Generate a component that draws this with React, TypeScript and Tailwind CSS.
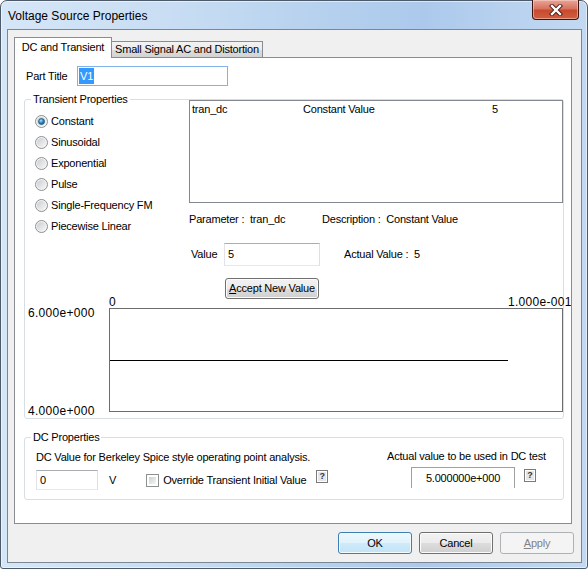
import React from 'react'

const radios = ['Constant', 'Sinusoidal', 'Exponential', 'Pulse', 'Single-Frequency FM', 'Piecewise Linear']

function Radio({ checked }: { checked?: boolean }) {
  return (
    <svg width="13" height="13" viewBox="0 0 13 13" className="shrink-0">
      <defs>
        <linearGradient id="rbBg" x1="0" y1="0" x2="1" y2="1">
          <stop offset="0" stopColor="#c9cdd2" />
          <stop offset="1" stopColor="#f7f7f7" />
        </linearGradient>
        <radialGradient id="rbDot" cx="0.4" cy="0.35" r="0.75">
          <stop offset="0" stopColor="#a6e4ff" />
          <stop offset="0.45" stopColor="#2f93cc" />
          <stop offset="1" stopColor="#0d4a78" />
        </radialGradient>
      </defs>
      <circle cx="6.5" cy="6.5" r="6" fill="#f4f4f4" stroke="#8e8f8f" />
      <circle cx="6.5" cy="6.5" r="4.6" fill="url(#rbBg)" />
      {checked && <circle cx="6.5" cy="6.5" r="3" fill="url(#rbDot)" stroke="#1c4f74" strokeWidth="0.7" />}
    </svg>
  )
}

function Help() {
  return (
    <span className="flex h-[13px] w-[12px] shrink-0 items-center justify-center border border-[#7a7a7a] bg-[#e6e6e6] shadow-[inset_0_0_0_1px_#ffffff] text-[9px] font-bold leading-none tracking-normal text-[#333]">
      ?
    </span>
  )
}

const btn =
  'flex items-center justify-center rounded-[3px] border border-[#707070] bg-[linear-gradient(#f2f2f2_0%,#ebebeb_50%,#dddddd_51%,#cfcfcf_100%)] shadow-[inset_0_0_0_1px_#fcfcfc]'

export default function App() {
  return (
    <div className="relative flex h-[569px] w-[588px] flex-col rounded-t-[7px] rounded-b-[3px] border border-[#4d5a69] bg-[linear-gradient(90deg,#d5e6f7_0%,#c8ddf3_30%,#b9d3ef_50%,#acc9ec_72%,#c3d9f2_100%)] pb-[5px] pl-[6px] pr-[5px] font-['Liberation_Sans',Arial,sans-serif] text-[11px] leading-[13px] tracking-[-0.2px] text-black shadow-[inset_0_0_0_1px_rgba(255,255,255,0.55)]">
      {/* title bar */}
      <div className="flex h-[28px] items-start">
        <span className="ml-[1px] mt-[7px] text-[12px] leading-[16px] tracking-normal text-black">Voltage Source Properties</span>
        <div className="ml-auto mr-[3px] mt-[-1px] flex h-[20px] w-[47px] items-center justify-center rounded-b-[4px] border border-t-0 border-[#3d1410] bg-[linear-gradient(#e8a599_0%,#d7735f_45%,#c84a2f_55%,#d0603f_100%)] shadow-[inset_0_0_0_1px_rgba(255,220,210,0.5)]">
          <svg width="14" height="12" viewBox="0 0 14 12">
            <path d="M3 2 L11 10 M11 2 L3 10" stroke="#4a1a12" strokeWidth="4.2" strokeLinecap="square" />
            <path d="M3 2 L11 10 M11 2 L3 10" stroke="#ffffff" strokeWidth="2.4" strokeLinecap="square" />
          </svg>
        </div>
      </div>

      {/* client area */}
      <div className="flex flex-1 flex-col border border-[#7b8794] bg-[#f0f0f0] pl-[6px] pt-[7px]">
        {/* tabs */}
        <div className="flex h-[20px] items-end">
          <div className="relative z-10 mb-[-1px] flex h-[21px] w-[98px] items-center justify-center border border-b-0 border-[#898c95] bg-white pb-[1px]">
            DC and Transient
          </div>
          <div className="flex h-[16px] w-[151px] items-center justify-center border-r border-t border-[#898c95] bg-[linear-gradient(#f3f3f3_0%,#ebebeb_50%,#dddddd_51%,#d3d3d3_100%)]">
            Small Signal AC and Distortion
          </div>
        </div>

        {/* tab page */}
        <div className="h-[467px] w-[558px] overflow-hidden border border-[#898c95] bg-white">
          <div className="ml-[11px] mt-[8px] flex h-[20px] items-center">
            <span className="w-[51px]">Part Title</span>
            <div className="flex h-[20px] w-[151px] items-center border border-[#7eb4ea] bg-white pl-[1px]">
              <span className="bg-[#3399ff] px-[1px] leading-[16px] text-white">V1</span>
            </div>
          </div>

          {/* Transient Properties */}
          <div className="relative ml-[9px] mt-[13px] h-[320px] w-[540px] rounded-[3px] border border-[#d5dfe5]">
            <span className="absolute left-[6px] top-[-7px] bg-white px-[2px]">Transient Properties</span>
            <div className="flex">
              <div className="w-[164px] pl-[10px] pt-[11px]">
                {radios.map((r, i) => (
                  <div key={r} className="flex h-[21px] items-center gap-[3px]">
                    <Radio checked={i === 0} />
                    <span>{r}</span>
                  </div>
                ))}
              </div>
              <div className="w-[374px]">
                <div className="h-[103px] border border-[#828790] bg-white pl-[2px] pt-[2px]">
                  <div className="flex">
                    <span className="w-[111px]">tran_dc</span>
                    <span className="w-[189px]">Constant Value</span>
                    <span>5</span>
                  </div>
                </div>
                <div className="mt-[10px] flex whitespace-pre">
                  <span className="w-[133px]">Parameter :  tran_dc</span>
                  <span>Description :  Constant Value</span>
                </div>
                <div className="mt-[17px] flex h-[23px] items-center pl-[2px]">
                  <span className="w-[33px]">Value</span>
                  <div className="flex h-[23px] w-[96px] items-center border border-[#abadb3] border-b-[#e3e9ef] border-l-[#e2e3ea] border-r-[#dbdfe6] bg-white pl-[3px]">
                    5
                  </div>
                  <span className="ml-[24px] whitespace-pre">Actual Value :  5</span>
                </div>
                <div className="ml-[36px] mt-[12px]">
                  <div className={`${btn} h-[21px] w-[94px]`}>
                    <span>
                      <span className="underline">A</span>ccept New Value
                    </span>
                  </div>
                </div>
              </div>
            </div>

            {/* chart */}
            <div className="mt-[-3px] flex text-[12px] leading-[13px] tracking-[0.3px]">
              <div className="flex h-[122px] w-[84px] flex-col justify-between pl-[3px] pt-[11px]">
                <span>6.000e+000</span>
                <span>4.000e+000</span>
              </div>
              <div className="flex w-[454px] flex-col">
                <div className="flex h-[12px] leading-[12px]">
                  <span className="w-[399px] shrink-0">0</span>
                  <span className="shrink-0 whitespace-nowrap">1.000e-001</span>
                </div>
                <div className="h-[104px] border border-[#6d6d6d] bg-white pt-[51px]">
                  <div className="h-px w-[398px] bg-black" />
                </div>
              </div>
            </div>
          </div>

          {/* DC Properties */}
          <div className="relative ml-[9px] mt-[18px] flex h-[63px] w-[540px] rounded-[3px] border border-[#d5dfe5]">
            <span className="absolute left-[6px] top-[-7px] bg-white px-[2px]">DC Properties</span>
            <div className="pl-[11px] pt-[13px]">
              <div>DC Value for Berkeley Spice style operating point analysis.</div>
              <div className="mt-[6px] flex h-[20px] items-center">
                <div className="flex h-[20px] w-[62px] items-center border border-[#abadb3] border-b-[#e3e9ef] border-l-[#e2e3ea] border-r-[#dbdfe6] bg-white pl-[3px]">
                  0
                </div>
                <span className="ml-[11px]">V</span>
                <span className="ml-[30px] h-[13px] w-[13px] border border-[#8e8f8f] bg-white p-[2px]">
                  <span className="block h-full w-full bg-[linear-gradient(135deg,#cbcfd5,#f6f6f6)]" />
                </span>
                <span className="ml-[4px]">Override Transient Initial Value</span>
                <span className="ml-[10px] self-start">
                  <Help />
                </span>
              </div>
            </div>
            <div className="ml-auto mr-[15px] w-[161px] pt-[12px]">
              <div className="whitespace-nowrap">Actual value to be used in DC test</div>
              <div className="mt-[4px] flex items-start">
                <div className="ml-[24px] flex h-[21px] w-[104px] items-center justify-center border border-b-0 border-[#a0a0a0]">
                  5.000000e+000
                </div>
                <span className="ml-[9px] mt-[2px]">
                  <Help />
                </span>
              </div>
            </div>
          </div>
        </div>

        {/* buttons */}
        <div className="mt-[8px] flex gap-[7px] justify-end pr-[7px]">
          <div className="flex h-[22px] w-[74px] items-center justify-center rounded-[3px] border border-[#3c7fb1] bg-[linear-gradient(#eef8fd_0%,#e0f2fb_50%,#cfeaf9_51%,#c2e4f6_100%)] shadow-[inset_0_0_0_1px_#f4fbfe]">
            OK
          </div>
          <div className={`${btn} h-[22px] w-[74px]`}>Cancel</div>
          <div className="flex h-[22px] w-[74px] items-center justify-center rounded-[3px] border border-[#adb2b5] bg-[#f4f4f4] text-[#838383]">
            <span>
              <span className="underline">A</span>pply
            </span>
          </div>
        </div>
      </div>
    </div>
  )
}
